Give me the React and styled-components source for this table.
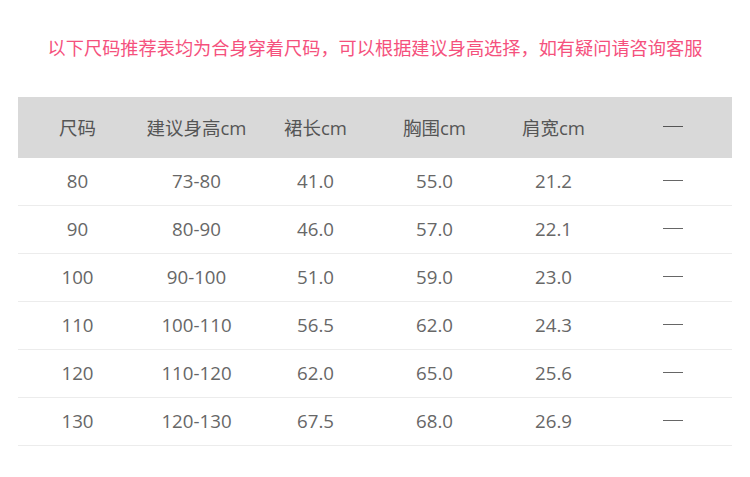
import styled, { createGlobalStyle } from "styled-components";

const GlobalStyle = createGlobalStyle`
  html, body {
    margin: 0;
    padding: 0;
    background: #fff;
  }
  body {
    font-family: "Open Sans", "Noto Sans CJK SC", sans-serif;
  }
`;

const Page = styled.div`
  width: 750px;
  height: 477px;
  padding: 34px 18px 0;
  box-sizing: border-box;
`;

const Notice = styled.p`
  margin: 0 0 37px;
  text-align: center;
  color: #f5517d;
  font-size: 18.2px;
  line-height: 26px;
  font-family: "Noto Sans CJK SC", sans-serif;
`;

const Table = styled.div`
  display: grid;
  grid-template-columns: repeat(6, 119px);
`;

const HeadCell = styled.div`
  height: 61px;
  background: #d9d9d9;
  display: flex;
  align-items: center;
  justify-content: center;
  color: #555;
  font-size: 18.5px;
  padding-bottom: 2px;
  box-sizing: border-box;
`;

const Cell = styled.div`
  height: 48px;
  border-bottom: 1px solid #ececec;
  box-sizing: border-box;
  display: flex;
  align-items: center;
  justify-content: center;
  color: #676767;
  font-size: 18.7px;
  padding-bottom: 2px;
`;

const Dash = styled.span`
  display: inline-block;
  width: 20px;
  height: 1px;
  background: ${(p) => (p.$head ? "#555" : "#666")};
`;

const headers = ["尺码", "建议身高cm", "裙长cm", "胸围cm", "肩宽cm", null];

const rows = [
  ["80", "73-80", "41.0", "55.0", "21.2"],
  ["90", "80-90", "46.0", "57.0", "22.1"],
  ["100", "90-100", "51.0", "59.0", "23.0"],
  ["110", "100-110", "56.5", "62.0", "24.3"],
  ["120", "110-120", "62.0", "65.0", "25.6"],
  ["130", "120-130", "67.5", "68.0", "26.9"],
];

export default function App() {
  return (
    <>
      <GlobalStyle />
      <Page>
        <Notice>以下尺码推荐表均为合身穿着尺码，可以根据建议身高选择，如有疑问请咨询客服</Notice>
        <Table>
          {headers.map((h, i) => (
            <HeadCell key={i}>{h ? h : <Dash $head />}</HeadCell>
          ))}
          {rows.map((r, ri) => [
            ...r.map((v, ci) => <Cell key={ri + "-" + ci}>{v}</Cell>),
            <Cell key={ri + "-dash"}>
              <Dash />
            </Cell>,
          ])}
        </Table>
      </Page>
    </>
  );
}
